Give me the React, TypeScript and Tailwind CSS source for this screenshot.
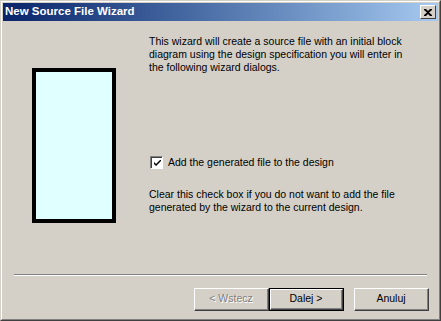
import React from 'react';

const font = { fontFamily: '"Liberation Sans", Arial, sans-serif' };

function Button({ label, disabled, isDefault }: { label: string; disabled?: boolean; isDefault?: boolean }) {
  return (
    <div className={`w-[75px] h-[23px] ${isDefault ? 'border border-black' : ''}`}>
      <div className="w-full h-full border-t border-l border-white border-r border-b border-r-[#404040] border-b-[#404040] bg-[#d4d0c8]">
        <div className="w-full h-full border-r border-b border-[#808080] flex items-center justify-center text-[10.5px]">
          {disabled ? (
            <span className="text-[#808080] [text-shadow:1px_1px_0_#ffffff]">{label}</span>
          ) : (
            <span className="text-black">{label}</span>
          )}
        </div>
      </div>
    </div>
  );
}

export default function App() {
  return (
    <div style={font} className="w-[441px] h-[321px] bg-[#d4d0c8] border-l border-t border-[#d4d0c8] border-r border-b border-r-[#404040] border-b-[#404040] overflow-hidden">
      <div className="w-full h-full border-l border-t border-white border-r border-b border-r-[#808080] border-b-[#808080] flex flex-col">
        {/* Title bar */}
        <div className="h-[18px] mx-[1px] mt-[1px] flex items-center justify-between bg-gradient-to-r from-[#0a246a] to-[#a6caf0] pl-[2px] pr-[2px]">
          <span className="text-white font-bold text-[11.5px] leading-none">New Source File Wizard</span>
          <div className="w-[16px] h-[14px] bg-[#d4d0c8] border-t border-l border-white border-r border-b border-r-[#404040] border-b-[#404040] flex items-center justify-center">
            <svg width="8" height="7" viewBox="0 0 8 7">
              <path d="M0 0h2l2 2 2-2h2v1L5 3.5 8 6v1H6L4 5 2 7H0V6l3-2.5L0 1z" fill="#000" />
            </svg>
          </div>
        </div>

        {/* Body */}
        <div className="flex flex-1">
          <div className="w-[147px] pl-[30px] pt-[47px]">
            <div className="w-[84px] h-[155px] border-[4px] border-black bg-[#e0ffff]" />
          </div>
          <div className="flex-1 pt-[14px] text-[10.5px] leading-[13px] text-black">
            <p>
              This wizard will create a source file with an initial block<br />
              diagram using the design specification you will enter in<br />
              the following wizard dialogs.
            </p>
            <label className="flex items-center gap-[5px] mt-[82px] ml-[1px]">
              <span className="w-[13px] h-[13px] border-t border-l border-[#808080] border-r border-b border-r-white border-b-white">
                <span className="block w-full h-full border-t border-l border-[#404040] bg-white flex items-center justify-center">
                  <svg width="7" height="7" viewBox="0 0 7 7">
                    <path d="M0 2l2 2 5-5v2L2 6 0 4z" fill="#000" />
                  </svg>
                </span>
              </span>
              <span>Add the generated file to the design</span>
            </label>
            <p className="mt-[19px]">
              Clear this check box if you do not want to add the file<br />
              generated by the wizard to the current design.
            </p>
          </div>
        </div>

        {/* Separator */}
        <div className="mx-[12px] border-t border-[#808080] border-b border-b-white" />

        {/* Buttons */}
        <div className="flex justify-end items-start gap-[10px] pr-[10px] pt-[12px] h-[43px]">
          <div className="flex">
            <Button label="< Wstecz" disabled />
            <Button label="Dalej >" isDefault />
          </div>
          <Button label="Anuluj" />
        </div>
      </div>
    </div>
  );
}
